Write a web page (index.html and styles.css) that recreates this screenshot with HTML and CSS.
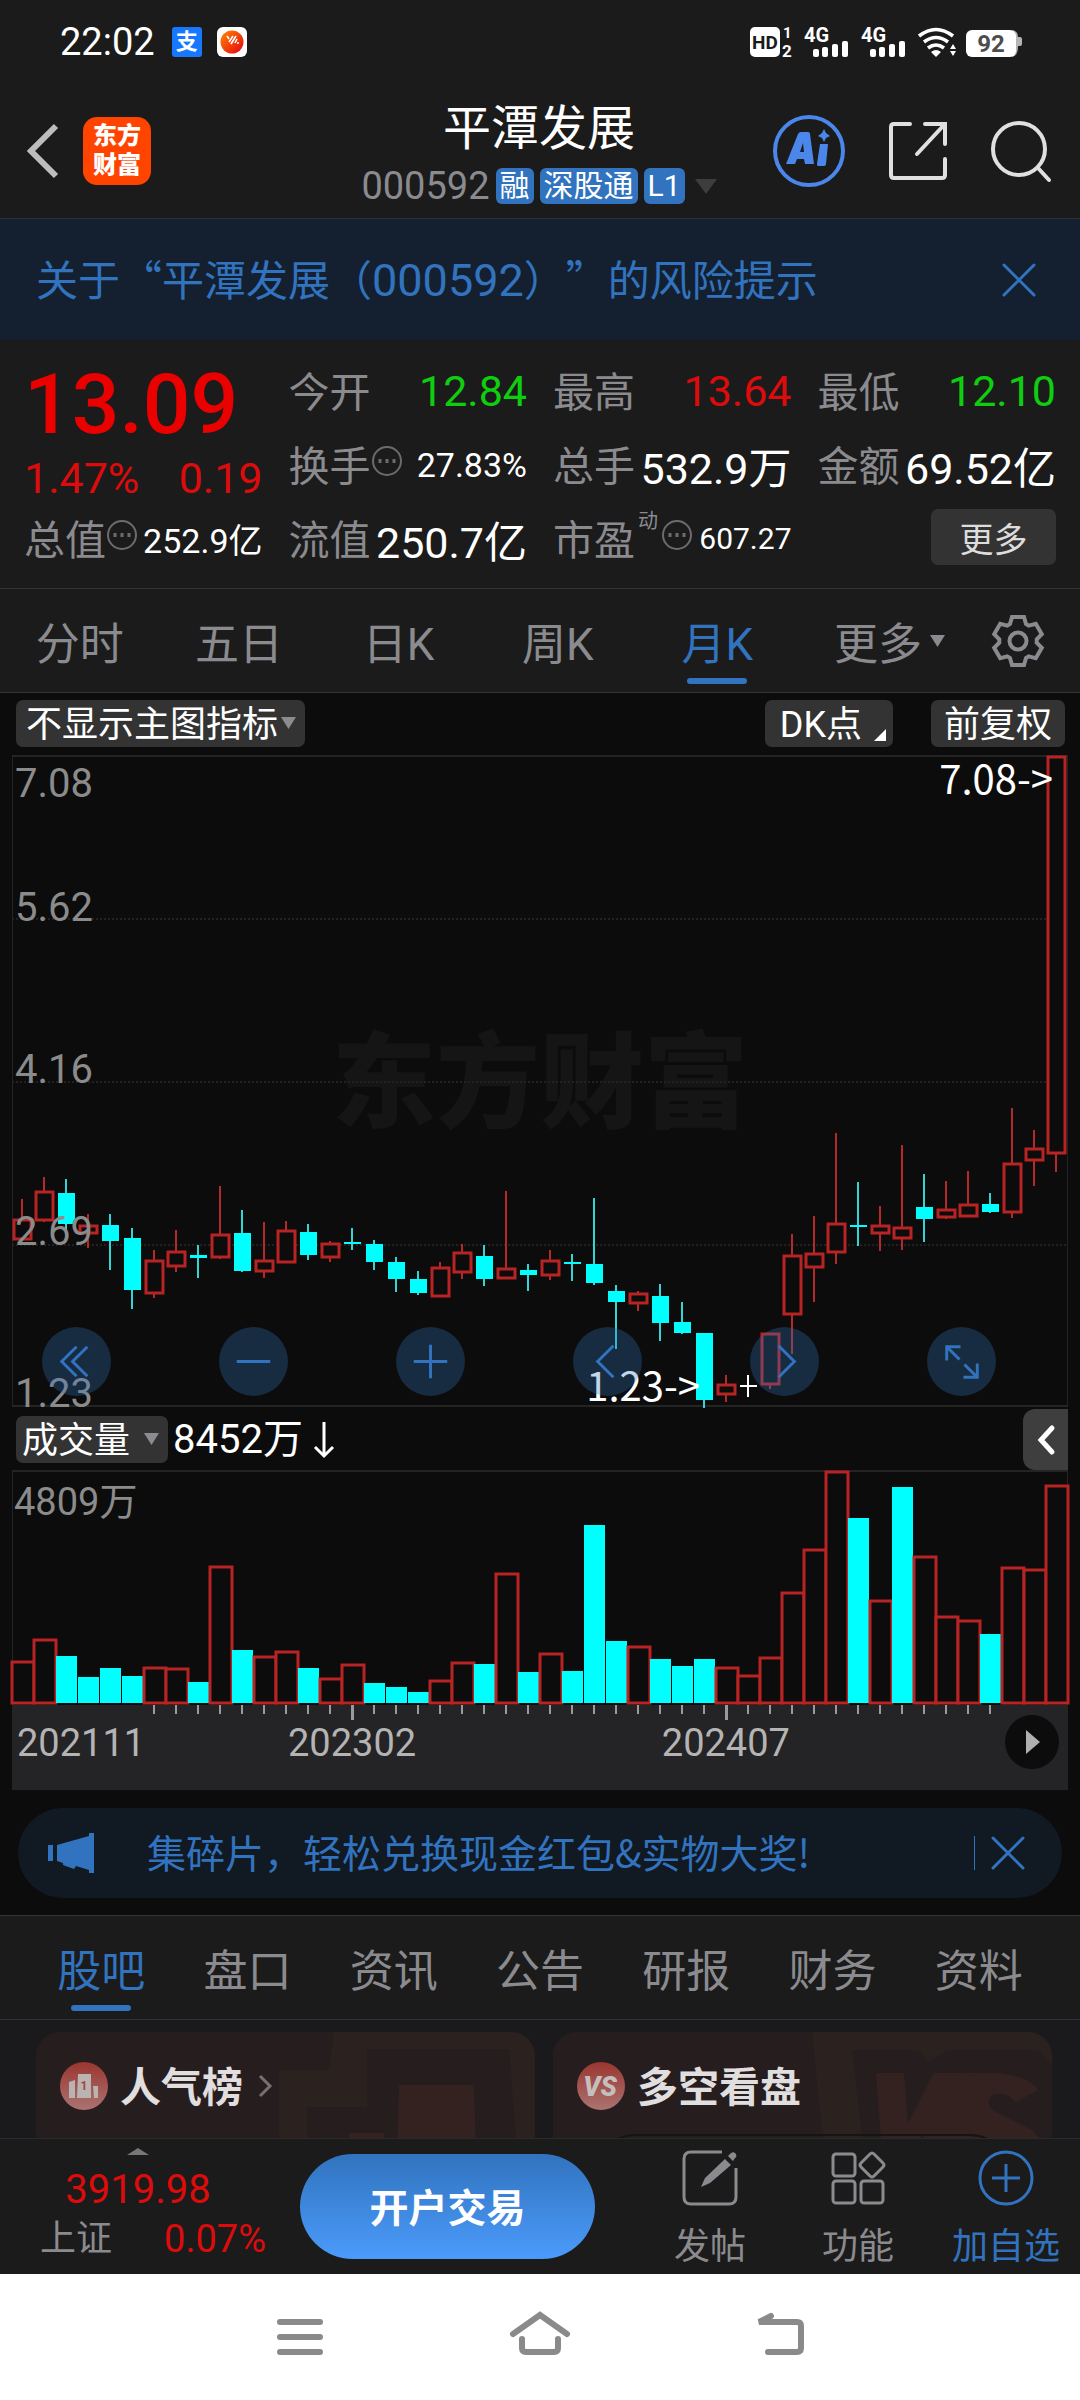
FILE: index.html
```html
<!DOCTYPE html>
<html lang="zh-CN">
<head>
  <meta charset="UTF-8">
  <meta name="viewport" content="width=device-width, initial-scale=1.0">
  <title>平潭发展 000592</title>
  <link rel="stylesheet" href="styles.css">
</head>
<body>
  <div class="status-bar">
    <span class="clock">22:02</span>
    <span class="app-badge alipay">支</span>
    <svg class="app-badge" width="30" height="30" viewBox="0 0 30 30">
      <defs><linearGradient id="sun" x1="0" y1="0" x2="1" y2="1"><stop offset="0" stop-color="#ff8a00"/><stop offset="1" stop-color="#e60012"/></linearGradient></defs>
      <rect width="30" height="30" rx="6" fill="#fff"/>
      <circle cx="15" cy="15" r="11.5" fill="url(#sun)"/>
      <path d="M10 9l2 3M12 15l4-6M14 17l5-8M18 16l2-4M20 16l2 0" stroke="#fff" stroke-width="1.6" fill="none"/>
    </svg>
    <svg class="system-icons" width="272" height="40" viewBox="0 -5 272 40">
      <rect width="30" height="30" rx="5" fill="#fff"/>
      <text x="15" y="22" font-size="19" font-weight="700" text-anchor="middle" fill="#1b1b1b">HD</text>
      <g fill="#fff" font-weight="700">
        <text x="33" y="11" font-size="15">1</text>
        <text x="32" y="30" font-size="17">2</text>
        <text x="54" y="15" font-size="20">4G</text>
        <text x="111" y="15" font-size="20">4G</text>
      </g>
      <g fill="#fff">
        <rect x="63" y="22" width="6" height="8" rx="2"/><rect x="72" y="20" width="6" height="10" rx="2"/><rect x="82" y="17" width="6" height="13" rx="2"/><rect x="92" y="14" width="6" height="16" rx="2"/>
        <rect x="120" y="22" width="6" height="8" rx="2"/><rect x="129" y="20" width="6" height="10" rx="2"/><rect x="139" y="17" width="6" height="13" rx="2"/><rect x="149" y="14" width="6" height="16" rx="2"/>
        <path d="M186 30l-5-5q5-4 10 0z"/>
        <path d="M200 22l3-5 3 5zM200 24l3 5 3-5z"/>
      </g>
      <path d="M169 9q17-13 34 0M174 15q12-9 24 0M178 21q8-6 16 0" fill="none" stroke="#fff" stroke-width="3.6"/>
      <path d="M262 3q6 1 6 7h2q2 0 2 2v5q0 2-2 2h-2q0 10-6 11z" fill="#b5b5b5"/>
      <rect x="216" y="3" width="50" height="27" rx="6" fill="#fff"/>
      <text x="241" y="25" font-size="24" font-weight="700" text-anchor="middle" fill="#4d4d4d">92</text>
    </svg>
  </div>

  <header class="top-bar">
    <div class="top-left">
      <button class="icon-btn" aria-label="返回">
        <svg width="33" height="56" viewBox="0 0 33 56"><path d="M29 3L4 28l25 25" fill="none" stroke="#bdbdbd" stroke-width="6"/></svg>
      </button>
      <a class="brand" href="#">东方<br>财富</a>
    </div>
    <div class="stock">
      <h1>平潭发展</h1>
      <div class="stock-sub">
        <span class="code">000592</span>
        <span class="tag">融</span>
        <span class="tag">深股通</span>
        <span class="tag">L1</span>
        <svg class="tag-more" width="22" height="15" viewBox="0 0 22 15"><path d="M0 0h22L11 15z" fill="#3d3d3d"/></svg>
      </div>
    </div>
    <div class="top-right">
      <button class="icon-btn" aria-label="AI">
        <svg width="72" height="72" viewBox="0 0 72 72">
          <circle cx="36" cy="36" r="34" fill="none" stroke="#4b87ea" stroke-width="4"/>
          <path fill-rule="evenodd" d="M13 49L25 19q1-2 3-2h7q2 0 2 2l4 30h-9l-1-5h-7l-2 5zM27 37h4l-1-9z" fill="#4b87ea"/>
          <path d="M47 29h8l-2 20q0 2-2 2h-6q-1 0-1-2zM51 14l2 4 4 3-4 2-2 4-2-4-4-2 4-3z" fill="#4b87ea"/>
        </svg>
      </button>
      <button class="icon-btn" aria-label="分享">
        <svg width="60" height="60" viewBox="0 0 60 60" fill="none" stroke="#e0e0e0" stroke-width="4" stroke-linecap="round">
          <path d="M22 3H6q-3 0-3 3v48q0 3 3 3h48q3 0 3-3V38M37 3h20v20M56 4L29 33"/>
        </svg>
      </button>
      <button class="icon-btn" aria-label="搜索">
        <svg width="60" height="62" viewBox="0 0 60 62" fill="none" stroke="#e0e0e0" stroke-width="4" stroke-linecap="round">
          <circle cx="28" cy="29" r="26"/><path d="M47 48l11 12"/>
        </svg>
      </button>
    </div>
  </header>

  <div class="risk-banner">
    <a href="#">关于“平潭发展（<span class="num">000592</span>）”的风险提示</a>
    <button class="icon-btn" aria-label="关闭">
      <svg width="34" height="34" viewBox="0 0 34 34"><path d="M2 2l30 30M32 2L2 32" stroke="#3173be" stroke-width="3" stroke-linecap="round"/></svg>
    </button>
  </div>

  <section class="quote">
    <div class="price-block">
      <div class="price">13.09</div>
      <div class="change"><span>1.47%</span><span>0.19</span></div>
    </div>
    <div class="cell"><span>今开</span><b class="down">12.84</b></div>
    <div class="cell"><span>最高</span><b class="up">13.64</b></div>
    <div class="cell"><span>最低</span><b class="down">12.10</b></div>
    <div class="cell"><span>换手</span><i class="tip"></i><b class="mid">27.83%</b></div>
    <div class="cell"><span>总手</span><b>532.9万</b></div>
    <div class="cell"><span>金额</span><b>69.52亿</b></div>
    <div class="cell"><span>总值</span><i class="tip"></i><b class="mid">252.9亿</b></div>
    <div class="cell"><span>流值</span><b>250.7亿</b></div>
    <div class="cell"><span>市盈</span><sup>动</sup><i class="tip"></i><b class="small">607.27</b></div>
    <div class="cell"><button class="more-btn">更多</button></div>
  </section>

  <nav class="period-tabs">
    <button>分时</button>
    <button>五日</button>
    <button>日K</button>
    <button>周K</button>
    <button class="active">月K</button>
    <button>更多<svg width="15" height="12" viewBox="0 0 15 12"><path d="M0 0h15L7.500 12z" fill="#8b8b8f"/></svg></button>
    <button aria-label="设置">
      <svg width="54" height="54" viewBox="-27 -27 54 54" fill="none" stroke="#8b8b8f" stroke-width="4">
        <path d="M-6-24H6L8-17 10.700-15.400 17.800-17.200 23.800-6.800 18.700-1.600V1.600L23.800 6.800 17.800 17.200 10.700 15.400 8 17 6 24H-6L-8 17-10.700 15.400-17.800 17.200-23.800 6.800-18.700 1.600V-1.600L-23.800-6.800-17.800-17.200-10.700-15.400-8-17z"/>
        <circle r="8.500"/>
      </svg>
    </button>
  </nav>

  <main class="chart">
    <div class="chart-tools">
      <label class="picker main-picker">
        <select aria-label="主图指标"><option>不显示主图指标</option></select>
        <svg width="15" height="12" viewBox="0 0 15 12"><path d="M0 0h15L7.500 12z"/></svg>
      </label>
      <button class="tool dk">DK点<svg width="12" height="12" viewBox="0 0 12 12"><path d="M12 0v12H0z" fill="#fff"/></svg></button>
      <button class="tool">前复权</button>
    </div>

    <div class="plot">
      <div class="watermark">东方财富</div>
      <svg id="candles" viewBox="0 0 1056 652" preserveAspectRatio="none"></svg>
      <div class="scale">
        <span>7.08</span><span>5.62</span><span>4.16</span><span>2.69</span><span>1.23</span>
      </div>
      <div class="plot-buttons">
        <button aria-label="最早"><svg viewBox="0 0 70 70"><path d="M35 20L20 35l15 15M46 20L31 35l15 15"/></svg></button>
        <button aria-label="缩小"><svg viewBox="0 0 70 70"><path d="M18 35h34"/></svg></button>
        <button aria-label="放大"><svg viewBox="0 0 70 70"><path d="M18 35h34M35 18v34"/></svg></button>
        <button aria-label="向左"><svg viewBox="0 0 70 70"><path d="M41 19L25 35l16 16"/></svg></button>
        <button aria-label="向右"><svg viewBox="0 0 70 70"><path d="M29 19l16 16-16 16"/></svg></button>
        <button aria-label="全屏"><svg viewBox="0 0 70 70"><path d="M20 34V20h14M20 20l13 13M51 37v14H37M51 51L38 38"/></svg></button>
      </div>
    </div>

    <div class="volume-tools">
      <label class="picker volume-picker">
        <select aria-label="副图指标"><option>成交量</option></select>
        <svg width="15" height="12" viewBox="0 0 15 12"><path d="M0 0h15L7.500 12z"/></svg>
      </label>
      <span class="volume-now">8452万</span>
      <svg width="20" height="36" viewBox="0 0 20 36" fill="none" stroke="#fff" stroke-width="3"><path d="M10 0v34M1 25l9 9 9-9"/></svg>
      <button class="drawer" aria-label="展开">
        <svg width="18" height="30" viewBox="0 0 18 30"><path d="M15 3L4 15l11 12" fill="none" stroke="#fff" stroke-width="5" stroke-linecap="round"/></svg>
      </button>
    </div>

    <div class="volume">
      <span class="volume-max">4809万</span>
      <svg id="bars" viewBox="0 0 1056 234" preserveAspectRatio="none"></svg>
    </div>

    <div class="timeline">
      <svg id="ticks" viewBox="0 0 1056 16" preserveAspectRatio="none"></svg>
      <div class="dates">
        <span>202111</span><span>202302</span><span>202407</span>
        <button class="play" aria-label="播放"><svg width="14" height="24" viewBox="0 0 14 24"><path d="M0 0l14 12L0 24z" fill="#b0b0b0"/></svg></button>
      </div>
    </div>

    <div class="promo">
      <svg width="46" height="40" viewBox="0 0 46 40" fill="#3173be"><path d="M0 12h5v16H0zM9 12L41 3V0h5v40h-5v-3l-13-4-2 3-11-4v-2l-6-2z"/></svg>
      <a href="#">集碎片，轻松兑换现金红包&amp;实物大奖!</a>
      <button class="icon-btn" aria-label="关闭">
        <svg width="34" height="34" viewBox="0 0 34 34"><path d="M2 2l30 30M32 2L2 32" stroke="#3173be" stroke-width="3" stroke-linecap="round"/></svg>
      </button>
    </div>
  </main>

  <nav class="info-tabs">
    <button class="active">股吧</button>
    <button>盘口</button>
    <button>资讯</button>
    <button>公告</button>
    <button>研报</button>
    <button>财务</button>
    <button>资料</button>
  </nav>

  <section class="cards">
    <article class="card">
      <svg class="card-art" viewBox="0 0 256 120" width="256" height="120">
        <path d="M55 0h201v120H0V38h50zM0 38h50z" fill="#2b211f"/>
        <path d="M28 75h60V17h142l8 103H28z" fill="#251d1e"/>
        <path d="M120 53h75l2 67h-79zM70 101h35v19H70z" fill="#342221"/>
      </svg>
      <div class="card-title">
        <svg width="48" height="48" viewBox="0 0 48 48">
          <circle cx="24" cy="24" r="24" fill="url(#badge)"/>
          <path d="M9 20l6-2v18H9zM18 12h13v24H17zM33 24h5v12h-4z" fill="#b9b3b2"/>
          <text x="24" y="28" font-size="12" font-weight="700" text-anchor="middle" fill="#a84440">1</text>
        </svg>
        <h2>人气榜</h2>
        <svg class="go" width="14" height="24" viewBox="0 0 14 24"><path d="M2 2l10 10L2 22" fill="none" stroke="#77706f" stroke-width="3"/></svg>
      </div>
    </article>
    <article class="card">
      <svg class="card-art" viewBox="0 0 256 120" width="256" height="120">
        <path d="M16 0h240v120H28z" fill="#2b211f"/>
        <path d="M56 18h66l10 12 20-12h90l14 14v88H68z" fill="#261e1e"/>
        <path d="M80 41h28l4 50 26-50h56q-24 8-24 28 0 12 14 22l14 29H86z" fill="#342221"/>
        <path d="M138 120l-12-18-8 18z" fill="#261e1e"/>
        <path d="M160 56q22-22 58-12 18 4 24 14l-22 12q-8-10-22-8-10 6-2 16l40 20 20 22h-46q-20-12-38-22-18-16-12-42z" fill="#342221"/>
      </svg>
      <div class="card-title">
        <svg width="48" height="48" viewBox="0 0 48 48">
          <defs><linearGradient id="badge" x1="0" y1="0" x2="0" y2="1"><stop offset="0" stop-color="#9a3631"/><stop offset="1" stop-color="#ab7370"/></linearGradient></defs>
          <circle cx="24" cy="24" r="24" fill="url(#badge)"/>
          <text x="23" y="34" font-size="27" font-weight="900" font-style="italic" text-anchor="middle" fill="#c4bebd">VS</text>
        </svg>
        <h2>多空看盘</h2>
      </div>
      <div class="versus"></div>
    </article>
  </section>

  <footer class="action-bar">
    <a class="index" href="#">
      <svg width="22" height="7" viewBox="0 0 22 7"><path d="M0 7L11 0l11 7z" fill="#77777a"/></svg>
      <strong>3919.98</strong>
      <span class="index-row"><span>上证</span><em>0.07%</em></span>
    </a>
    <button class="trade">开户交易</button>
    <div class="actions">
      <button>
        <svg width="56" height="56" viewBox="0 0 56 56" fill="none" stroke="#8b8b8f" stroke-width="3">
          <path d="M40 2H9Q2 2 2 9v38q0 7 7 7h38q7 0 7-7V18"/>
          <path d="M19 37l4-9L43 9l6 6-21 18zM46 6l3-3q3-2 5 1 1 3-1 4l-2 3z" fill="#8b8b8f" stroke="none"/>
        </svg>
        发帖
      </button>
      <button>
        <svg width="56" height="56" viewBox="0 0 56 56" fill="none" stroke="#8b8b8f" stroke-width="3">
          <rect x="3" y="4" width="22" height="22" rx="3"/><rect x="3" y="31" width="22" height="22" rx="3"/><rect x="31" y="31" width="22" height="22" rx="3"/>
          <path d="M40 4q2-2 4 0l9 9q2 2 0 4l-9 9q-2 2-4 0l-9-9q-2-2 0-4z"/>
        </svg>
        功能
      </button>
      <button class="primary">
        <svg width="56" height="56" viewBox="0 0 56 56" fill="none" stroke="#3173be" stroke-width="3">
          <circle cx="28" cy="28" r="26"/><path d="M14 28h28M28 14v28"/>
        </svg>
        加自选
      </button>
    </div>
  </footer>

  <div class="system-nav">
    <button aria-label="菜单"><svg width="60" height="50" viewBox="0 0 60 50"><path d="M10 10h40M10 25h40M10 40h40"/></svg></button>
    <button aria-label="主页"><svg width="60" height="50" viewBox="0 0 60 50"><path d="M3 22L30 3l27 19M12 27v9q0 4 4 4h28q4 0 4-4v-9"/></svg></button>
    <button aria-label="返回"><svg width="60" height="50" viewBox="0 0 60 50"><path d="M21 4L9 10h38q4 0 4 4v22q0 4-4 4H18"/></svg></button>
  </div>

  <script src="chart.js"></script>
</body>
</html>
```

FILE: styles.css
```css
* { margin: 0; padding: 0; box-sizing: border-box; }
body {
  display: flex; flex-direction: column; height: 100vh; overflow: hidden;
  background: #1b1b1b; color: #fff;
  font-family: Roboto, "Noto Sans CJK SC", sans-serif;
}
button { font: inherit; color: inherit; background: none; border: none; cursor: pointer; }
a { color: inherit; text-decoration: none; }
svg { display: block; flex: none; overflow: visible; }
.icon-btn { display: flex; }

/* status bar */
.status-bar { display: flex; align-items: center; height: 84px; padding: 0 58px 0 60px; }
.clock { font-size: 38px; margin-right: 17px; }
.app-badge { margin-right: 15px; }
.alipay {
  width: 30px; height: 30px; border-radius: 3px; background: #1677ff;
  font-size: 22px; font-weight: 700; line-height: 30px; text-align: center;
}
.system-icons { margin-left: auto; }

/* header */
.top-bar {
  display: grid; grid-template-columns: 1fr auto 1fr; align-items: center;
  height: 135px; padding: 0 29px 0 27px; border-bottom: 1px solid #303030;
}
.top-left, .top-right { display: flex; align-items: center; }
.top-left { gap: 23px; }
.top-right { justify-content: flex-end; gap: 43px; }
.brand {
  width: 68px; height: 68px; padding-top: 5px; border-radius: 14px; background: #ff4400;
  font-size: 24px; font-weight: 900; line-height: 29px; text-align: center;
}
.stock { display: flex; flex-direction: column; align-items: center; gap: 11px; padding-top: 3px; }
.stock h1 { font-size: 48px; font-weight: 400; line-height: 56px; }
.stock-sub { display: flex; align-items: center; gap: 6px; }
.code { font-size: 38px; line-height: 36px; color: #8b8b8f; }
.tag { padding: 0 4px; border-radius: 6px; background: #3173be; font-size: 30px; line-height: 36px; }
.tag-more { margin-left: 4px; }

.risk-banner {
  display: flex; align-items: center; justify-content: space-between;
  height: 121px; padding: 0 44px 0 36px; background: #14202f; color: #3173be;
  font-family: "Noto Sans CJK SC", sans-serif; font-size: 42px; text-spacing-trim: space-all;
}
.risk-banner a { padding-bottom: 4px; }
.risk-banner .num { font-family: Roboto, sans-serif; font-size: 45px; }

/* quote figures */
.quote {
  display: grid; grid-template-columns: repeat(4, 1fr); grid-template-rows: repeat(3, 74px);
  column-gap: 26px; padding: 12px 24px 14px; border-bottom: 1px solid #333;
}
.price-block { grid-row: span 2; padding-top: 8px; }
.price { color: #eb0000; font-size: 84px; font-weight: 500; line-height: 90px; }
.change { display: flex; justify-content: space-between; margin-top: 6px; color: #dc0c0c; font-size: 43px; line-height: 44px; }
.cell { display: flex; align-items: center; color: #8b8b8f; font-size: 41px; white-space: nowrap; }
.cell b { margin-left: auto; padding-top: 3px; color: #fff; font-size: 43px; font-weight: 400; }
.cell b.up { color: #dc0c0c; }
.cell b.down { color: #0fce0f; }
.cell b.mid { font-size: 34px; }
.cell b.small { font-size: 30px; }
.cell sup { align-self: flex-start; padding: 9px 3px 0; font-size: 20px; line-height: 24px; }
.tip {
  width: 30px; height: 30px; margin: 0 0 4px 1px; border: 2px solid #6c6c70; border-radius: 50%;
  background: radial-gradient(circle, #6c6c70 2px, transparent 2px) center / 7px 26px;
  background-repeat: repeat-x; background-clip: content-box; padding: 0 3px;
}
.more-btn { width: 125px; height: 56px; margin-left: auto; border-radius: 7px; background: #333; color: #ddd; font-size: 34px; }

/* tabs */
.period-tabs, .info-tabs { display: grid; color: #8b8b8f; font-size: 44px; }
.period-tabs { grid-template-columns: repeat(5, 1fr) 185px 72px; height: 104px; padding-right: 26px; border-bottom: 1px solid #333; }
.info-tabs { grid-template-columns: repeat(7, 1fr); height: 105px; padding: 0 28px; border-top: 1px solid #333; border-bottom: 1px solid #333; }
.period-tabs button, .info-tabs button { position: relative; display: flex; align-items: center; justify-content: center; gap: 8px; }
.period-tabs .active, .info-tabs .active { color: #3173be; }
.active::after {
  content: ""; position: absolute; left: 50%; bottom: 8px; width: 60px; height: 6px;
  margin-left: -30px; border-radius: 3px; background: #3173be;
}

/* chart */
.chart { padding: 7px 12px 17px; background: #0c0c0c; }
.chart-tools { display: flex; align-items: center; gap: 38px; height: 55px; padding: 0 3px 8px 4px; }
.picker { position: relative; display: flex; height: 47px; border-radius: 7px; background: #333; }
.picker select {
  appearance: none; border: none; background: none; color: #fff; width: 100%; padding-top: 4px;
  font-family: inherit; font-size: 36px; line-height: 43px;
}
.picker svg { position: absolute; right: 9px; top: 17px; fill: #8c8c90; pointer-events: none; }
.main-picker { width: 289px; padding-left: 10px; margin-right: auto; }
.volume-picker { width: 152px; padding-left: 6px; }
.tool { height: 47px; padding: 4px 13px 0; border-radius: 7px; background: #333; font-size: 36px; line-height: 43px; }
.dk { display: flex; padding: 4px 7px 0 15px; gap: 12px; }
.dk svg { margin-top: 25px; }

.plot { position: relative; height: 652px; border: 1px solid #242424; border-width: 2px 1px; }
.watermark {
  position: absolute; inset: 0; display: flex; align-items: center; justify-content: center;
  padding-bottom: 14px; color: #151515; font-size: 104px; font-weight: 900;
}
.scale {
  position: absolute; inset: 3px 0 -3px; display: grid; grid-template-rows: repeat(4, 1fr);
  padding-left: 2px; color: #8b8b8b; font-size: 40px; line-height: 28px;
}
.scale span { grid-column: 1; align-self: end; }
.scale span:nth-child(1) { grid-row: 1; align-self: start; padding-top: 10px; }
.scale span:nth-child(2) { grid-row: 1; }
#candles, #bars { position: absolute; left: -1px; top: -1px; width: calc(100% + 2px); height: calc(100% + 4px); }
#bars { height: calc(100% + 1px); }
#candles text { fill: #fff; font-family: "Noto Sans CJK SC", sans-serif; font-size: 40px; text-anchor: end; }
.grid-line { stroke: #222; stroke-width: 2; stroke-dasharray: 2 2; }
.up-bar { fill: #0c0c0c; stroke: #b82323; stroke-width: 3; }
.down-bar { fill: #00ffff; stroke: none; }
.flat-bar { fill: #fff; stroke: none; }
.wick { stroke-width: 2; }
.wick.r { stroke: #b42a2a; }
.wick.c { stroke: #35d3d3; }
.wick.w { stroke: #fff; }
.plot-buttons {
  position: absolute; left: 0; right: 0; bottom: 9px; display: flex;
  justify-content: space-between; padding: 0 71px 0 29px;
}
.plot-buttons button { width: 69px; height: 69px; border-radius: 50%; background: rgba(49, 115, 190, .3); }
.plot-buttons svg { width: 100%; fill: none; stroke: #3173be; stroke-width: 3; }

.volume-tools { display: flex; align-items: center; height: 63px; gap: 5px; padding: 2px 0 0 4px; }
.volume-now { font-size: 40px; line-height: 50px; margin-right: 6px; }
.drawer {
  display: flex; align-items: center; justify-content: center; width: 45px; height: 61px;
  margin-left: auto; border-radius: 12px 0 0 12px; background: #3e3e3e;
}
.volume { position: relative; height: 235px; border: 1px solid #242424; border-width: 2px 1px 0; }
.volume-max { position: absolute; left: 1px; top: 10px; color: #8b8b8b; font-size: 38px; line-height: 40px; }

.timeline { height: 85px; background: #242426; }
#ticks { width: 100%; height: 16px; }
.dates { position: relative; height: 44px; color: #b4b4b4; font-size: 38px; line-height: 44px; }
.dates span { position: absolute; left: 0; padding-left: 5px; }
.dates span:nth-child(2) { left: 32.2%; padding: 0; transform: translateX(-50%); }
.dates span:nth-child(3) { left: 67.6%; padding: 0; transform: translateX(-50%); }
.play {
  position: absolute; right: 9px; top: -6px; display: flex; align-items: center; justify-content: center;
  width: 54px; height: 54px; padding-left: 2px; border-radius: 50%; background: #0c0c0c;
}

.promo {
  display: flex; align-items: center; height: 90px; margin: 18px 6px 0; padding: 0 37px 0 30px;
  border-radius: 45px; background: #111922; color: #3173be; font-size: 39px;
  font-family: "Noto Sans CJK SC", sans-serif;
}
.promo a { flex: 1; margin-left: 53px; padding-bottom: 4px; }
.promo .icon-btn { padding-left: 16px; border-left: 1px solid #3173be; }

/* cards */
.cards {
  display: grid; grid-template-columns: 1fr 1fr; gap: 18px; flex: 1 1 0; min-height: 0; overflow: hidden;
  padding: 12px 28px 0 36px; background: #1a1a1c;
}
.card { position: relative; height: 300px; border-radius: 24px; background: #261e1e; overflow: hidden; }
.card-art { position: absolute; right: 0; top: 0; }
.card-title { position: relative; display: flex; align-items: center; height: 108px; padding-left: 24px; }
.card-title h2 { margin-left: 12px; padding-bottom: 4px; color: #e0dede; font-size: 41px; font-weight: 700; }
.go { margin-left: 15px; }
.versus { position: relative; height: 90px; margin: -6px 38px 0; border: 2px solid #171415; border-radius: 45px; }

/* bottom bars */
.action-bar { display: flex; align-items: center; height: 136px; border-top: 1px solid #2a2a2a; }
.index { display: flex; flex-direction: column; align-items: center; width: 226px; margin-left: 40px; color: #dc0c0c; }
.index svg { margin-right: 30px; }
.index strong { margin: 13px 30px 0 0; font-size: 40px; font-weight: 400; line-height: 44px; }
.index-row { display: flex; align-items: center; justify-content: space-between; align-self: stretch; font-size: 36px; line-height: 54px; color: #8b8b8f; }
.index-row em { color: #dc0c0c; font-size: 38px; font-style: normal; }
.trade {
  width: 295px; height: 105px; margin: 0 41px 0 34px; padding-bottom: 3px; border-radius: 53px;
  background: linear-gradient(#3173be, #4b9bfb); font-size: 39px; font-weight: 700;
}
.actions { display: grid; grid-template-columns: repeat(3, 1fr); flex: 1; padding-top: 5px; color: #8b8b8f; font-size: 36px; line-height: 44px; }
.actions button { display: flex; flex-direction: column; align-items: center; gap: 19px; }
.actions .primary { color: #3173be; }
.system-nav { display: flex; justify-content: center; align-items: center; gap: 180px; height: 126px; background: #fff; }
.system-nav svg { fill: none; stroke: #8a8a8a; stroke-width: 6; stroke-linecap: round; }
```

FILE: chart.js
```js
// [high, body top, body bottom, low, colour, volume top, volume colour]
const months = [
  [443, 464, 483, 483, 'r', 191, 'r'], [421, 436, 464, 466, 'r', 169, 'r'],
  [423, 437, 468, 480, 'c', 185, 'c'], [458, 470, 477, 492, 'r', 206, 'c'],
  [458, 469, 485, 514, 'c', 197, 'c'], [472, 482, 534, 553, 'c', 205, 'c'],
  [494, 505, 537, 542, 'r', 197, 'r'], [474, 496, 510, 516, 'r', 198, 'r'],
  [489, 499, 502, 522, 'c', 211, 'c'], [430, 479, 501, 503, 'r', 96, 'r'],
  [454, 477, 515, 516, 'c', 179, 'c'], [466, 505, 515, 522, 'r', 186, 'r'],
  [465, 475, 506, 507, 'r', 181, 'r'], [468, 476, 499, 504, 'c', 197, 'c'],
  [485, 488, 501, 506, 'r', 208, 'r'], [472, 486, 488, 494, 'c', 194, 'r'],
  [484, 488, 506, 514, 'c', 212, 'c'], [501, 506, 523, 536, 'c', 216, 'c'],
  [515, 523, 537, 539, 'c', 221, 'c'], [506, 512, 540, 540, 'r', 210, 'r'],
  [488, 497, 516, 523, 'r', 192, 'r'], [489, 500, 523, 530, 'c', 193, 'c'],
  [435, 513, 522, 522, 'r', 103, 'r'], [508, 514, 519, 535, 'c', 201, 'c'],
  [494, 505, 519, 524, 'r', 183, 'r'], [498, 506, 508, 525, 'c', 200, 'c'],
  [442, 508, 527, 529, 'c', 54, 'c'], [529, 535, 546, 593, 'c', 170, 'c'],
  [535, 538, 547, 555, 'r', 176, 'r'], [528, 540, 567, 585, 'c', 188, 'c'],
  [546, 566, 577, 578, 'c', 195, 'c'], [577, 577, 644, 652, 'c', 188, 'c'],
  [619, 629, 638, 646, 'r', 197, 'r'], [619, 629, 631, 641, 'w', 205, 'r'],
  [578, 578, 628, 633, 'r', 187, 'r'], [478, 500, 558, 598, 'r', 122, 'r'],
  [460, 498, 511, 546, 'r', 79, 'r'], [377, 468, 496, 508, 'r', 1, 'r'],
  [426, 469, 471, 490, 'c', 47, 'c'], [450, 470, 477, 495, 'r', 130, 'r'],
  [389, 472, 482, 494, 'r', 16, 'c'], [418, 451, 463, 486, 'c', 86, 'r'],
  [425, 454, 461, 463, 'r', 146, 'r'], [415, 449, 460, 460, 'r', 150, 'r'],
  [437, 448, 456, 457, 'c', 163, 'c'], [352, 408, 456, 462, 'r', 97, 'r'],
  [374, 393, 404, 430, 'r', 99, 'r'], [1, 1, 397, 416, 'r', 15, 'r']
];
const barClass = { r: 'up-bar', c: 'down-bar', w: 'flat-bar' };
const step = 22;

function line(cls, x1, y1, x2, y2) {
  return `<line class="${cls}" x1="${x1}" y1="${y1}" x2="${x2}" y2="${y2}"/>`;
}
function rect(cls, x, y, w, h) {
  return `<rect class="${cls}" x="${x}" y="${y}" width="${w}" height="${h}"/>`;
}

let candles = '';
let bars = '';
let ticks = '';

[163, 326, 489].forEach(y => { candles += line('grid-line', 0, y, 1056, y); });

months.forEach(([high, top, bottom, low, color, vol, volColor], i) => {
  const x = 10 + step * i;
  candles += line('wick ' + color, x, high, x, low);
  candles += rect(barClass[color], x - 8, top, 17, bottom - top);
  if (volColor === 'r') {
    bars += rect('up-bar', x - 10, vol, 22, 232 - vol);
  } else {
    bars += rect('down-bar', x - 10, vol, 21, 232 - vol);
  }
  if (i > 5 && i < 45) {
    const major = i === 15 || i === 32;
    ticks += rect('', x - 1, 0, major ? 3 : 2, major ? 15 : 9);
  }
});

candles += '<text x="1041" y="38">7.08-&gt;</text><text x="688" y="645">1.23-&gt;</text>';

document.getElementById('candles').innerHTML = candles;
document.getElementById('bars').innerHTML = bars;
document.getElementById('ticks').innerHTML = `<g fill="#9a9a9a">${ticks}</g>`;
```
